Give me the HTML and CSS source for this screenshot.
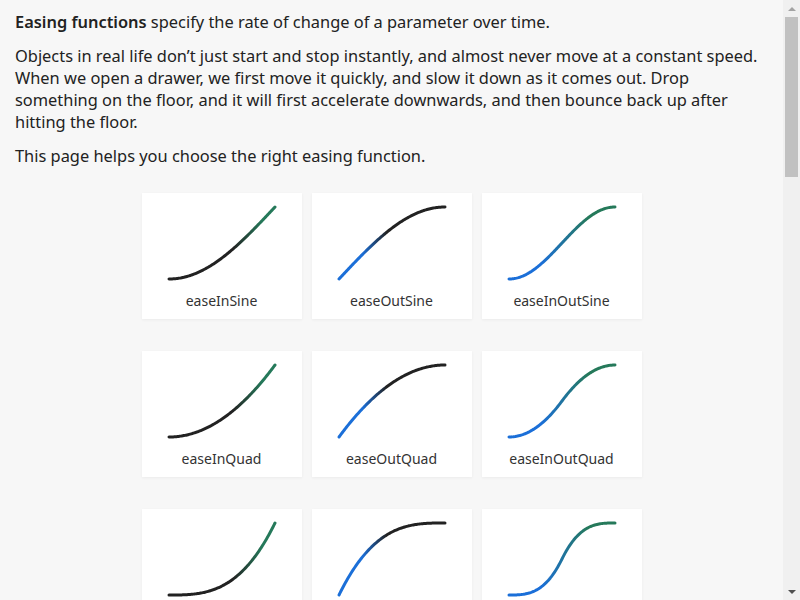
FILE: index.html
```html
<!DOCTYPE html>
<html lang="en">
<head>
  <meta charset="UTF-8" />
  <meta name="viewport" content="width=device-width, initial-scale=1.0"/>
  <title>Easing Functions Cheat Sheet</title>
  <link rel="stylesheet" href="styles.css">
</head>
<body>

  <!-- Intro -->
  <div class="intro">
    <p><b>Easing functions</b> specify the rate of change of a parameter over time.</p>
    <p>Objects in real life don’t just start and stop instantly, and almost never move at a constant speed. When we open a drawer, we first move it quickly, and slow it down as it comes out. Drop something on the floor, and it will first accelerate downwards, and then bounce back up after hitting the floor.</p>
    <p>This page helps you choose the right easing function.</p>
  </div>

  <!-- Cards get filled in by the script below -->
  <div class="grid" id="grid"></div>

  <!-- Window scrollbar -->
  <div class="scrollbar">
    <span class="arrow up"></span>
    <div class="track"><div class="thumb"></div></div>
    <span class="arrow down"></span>
  </div>

  <script>
    const PI = Math.PI;
    const c1 = 1.70158, c2 = c1 * 1.525, c3 = c1 + 1;
    const c4 = (2 * PI) / 3, c5 = (2 * PI) / 4.5;

    function bounceOut(x) {
      const n1 = 7.5625, d1 = 2.75;
      if (x < 1 / d1) return n1 * x * x;
      if (x < 2 / d1) return n1 * (x -= 1.5 / d1) * x + 0.75;
      if (x < 2.5 / d1) return n1 * (x -= 2.25 / d1) * x + 0.9375;
      return n1 * (x -= 2.625 / d1) * x + 0.984375;
    }

    const families = {
      Sine: [
        x => 1 - Math.cos((x * PI) / 2),
        x => Math.sin((x * PI) / 2),
        x => -(Math.cos(PI * x) - 1) / 2
      ],
      Quad: [
        x => x * x,
        x => 1 - (1 - x) * (1 - x),
        x => x < 0.5 ? 2 * x * x : 1 - Math.pow(-2 * x + 2, 2) / 2
      ],
      Cubic: [
        x => x * x * x,
        x => 1 - Math.pow(1 - x, 3),
        x => x < 0.5 ? 4 * x * x * x : 1 - Math.pow(-2 * x + 2, 3) / 2
      ],
      Quart: [
        x => Math.pow(x, 4),
        x => 1 - Math.pow(1 - x, 4),
        x => x < 0.5 ? 8 * Math.pow(x, 4) : 1 - Math.pow(-2 * x + 2, 4) / 2
      ],
      Quint: [
        x => Math.pow(x, 5),
        x => 1 - Math.pow(1 - x, 5),
        x => x < 0.5 ? 16 * Math.pow(x, 5) : 1 - Math.pow(-2 * x + 2, 5) / 2
      ],
      Expo: [
        x => x === 0 ? 0 : Math.pow(2, 10 * x - 10),
        x => x === 1 ? 1 : 1 - Math.pow(2, -10 * x),
        x => x === 0 ? 0 : x === 1 ? 1 : x < 0.5
          ? Math.pow(2, 20 * x - 10) / 2
          : (2 - Math.pow(2, -20 * x + 10)) / 2
      ],
      Circ: [
        x => 1 - Math.sqrt(1 - x * x),
        x => Math.sqrt(1 - Math.pow(x - 1, 2)),
        x => x < 0.5
          ? (1 - Math.sqrt(1 - Math.pow(2 * x, 2))) / 2
          : (Math.sqrt(1 - Math.pow(-2 * x + 2, 2)) + 1) / 2
      ],
      Back: [
        x => c3 * x * x * x - c1 * x * x,
        x => 1 + c3 * Math.pow(x - 1, 3) + c1 * Math.pow(x - 1, 2),
        x => x < 0.5
          ? (Math.pow(2 * x, 2) * ((c2 + 1) * 2 * x - c2)) / 2
          : (Math.pow(2 * x - 2, 2) * ((c2 + 1) * (x * 2 - 2) + c2) + 2) / 2
      ],
      Elastic: [
        x => x === 0 ? 0 : x === 1 ? 1 : -Math.pow(2, 10 * x - 10) * Math.sin((x * 10 - 10.75) * c4),
        x => x === 0 ? 0 : x === 1 ? 1 : Math.pow(2, -10 * x) * Math.sin((x * 10 - 0.75) * c4) + 1,
        x => x === 0 ? 0 : x === 1 ? 1 : x < 0.5
          ? -(Math.pow(2, 20 * x - 10) * Math.sin((20 * x - 11.125) * c5)) / 2
          : (Math.pow(2, -20 * x + 10) * Math.sin((20 * x - 11.125) * c5)) / 2 + 1
      ],
      Bounce: [
        x => 1 - bounceOut(1 - x),
        bounceOut,
        x => x < 0.5 ? (1 - bounceOut(1 - 2 * x)) / 2 : (1 + bounceOut(2 * x - 1)) / 2
      ]
    };

    // colour stops along the curve, left to right
    const BLUE = "#1b6fd8", GREEN = "#25795a", DARK = "#222";
    const kinds = [
      { prefix: "easeIn", stops: [[0, DARK], [0.6, DARK], [0.88, GREEN], [1, GREEN]] },
      { prefix: "easeOut", stops: [[0, BLUE], [0.22, BLUE], [0.45, DARK], [1, DARK]] },
      { prefix: "easeInOut", stops: [[0, BLUE], [0.3, BLUE], [0.75, GREEN], [1, GREEN]] }
    ];

    const W = 106, H = 72, X0 = 2, Y0 = 74;

    function curvePath(fn) {
      let d = "";
      for (let i = 0; i <= 100; i++) {
        const t = i / 100;
        const x = X0 + t * W;
        const y = Y0 - fn(t) * H;
        d += (i ? " L" : "M") + x.toFixed(2) + " " + y.toFixed(2);
      }
      return d;
    }

    const grid = document.getElementById("grid");
    let n = 0;

    for (const family in families) {
      families[family].forEach((fn, k) => {
        const name = kinds[k].prefix + family;
        const id = "g" + n++;
        const stops = kinds[k].stops
          .map(s => `<stop offset="${s[0]}" stop-color="${s[1]}"/>`)
          .join("");

        const card = document.createElement("a");
        card.className = "card";
        card.href = "#" + name;
        card.innerHTML = `
          <svg class="curve" width="110" height="76" viewBox="0 0 110 76">
            <defs>
              <linearGradient id="${id}" gradientUnits="userSpaceOnUse" x1="${X0}" y1="0" x2="${X0 + W}" y2="0">${stops}</linearGradient>
            </defs>
            <path d="${curvePath(fn)}" stroke="url(#${id})" />
          </svg>
          <span class="name">${name}</span>`;
        grid.appendChild(card);
      });
    }
  </script>
</body>
</html>
```

FILE: styles.css
```css
* {
  margin: 0;
  padding: 0;
  box-sizing: border-box;
}

body {
  background: #f7f7f7;
  color: #222;
  font-family: "Noto Sans", "Open Sans", sans-serif;
  padding: 11px 32px 40px 15px;
}

/* Intro text */
.intro p {
  font-size: 16.4px;
  line-height: 22px;
  margin-bottom: 12px;
}

.intro p:last-child {
  margin-bottom: 0;
}

.intro b {
  font-weight: 600;
}

/* Curve cards */
.grid {
  display: grid;
  grid-template-columns: repeat(3, 160px);
  justify-content: center;
  column-gap: 10px;
  row-gap: 32px;
  margin-top: 26px;
}

.card {
  background: #fff;
  height: 126px;
  padding-top: 12px;
  display: flex;
  flex-direction: column;
  align-items: center;
  text-decoration: none;
  box-shadow: 0 1px 3px rgba(0, 0, 0, 0.05);
}

.curve {
  overflow: visible;
}

.curve path {
  fill: none;
  stroke-width: 3;
  stroke-linecap: round;
  stroke-linejoin: round;
}

.name {
  margin-top: 10px;
  font-size: 14px;
  line-height: 20px;
  color: #333;
}

/* Scrollbar drawn over the right edge */
.scrollbar {
  position: fixed;
  top: 0;
  right: 0;
  bottom: 0;
  width: 17px;
  background: #f0f0f0;
  display: flex;
  flex-direction: column;
  align-items: center;
}

.arrow {
  height: 17px;
  width: 17px;
  display: flex;
  align-items: center;
  justify-content: center;
}

.arrow::before {
  content: "";
  border-left: 4px solid transparent;
  border-right: 4px solid transparent;
}

.arrow.up::before {
  border-bottom: 4px solid #a3a3a3;
}

.arrow.down::before {
  border-top: 4px solid #505050;
}

.track {
  flex: 1;
  width: 100%;
  padding: 0 2px;
}

.thumb {
  height: 160px;
  background: #c1c1c1;
}
```
